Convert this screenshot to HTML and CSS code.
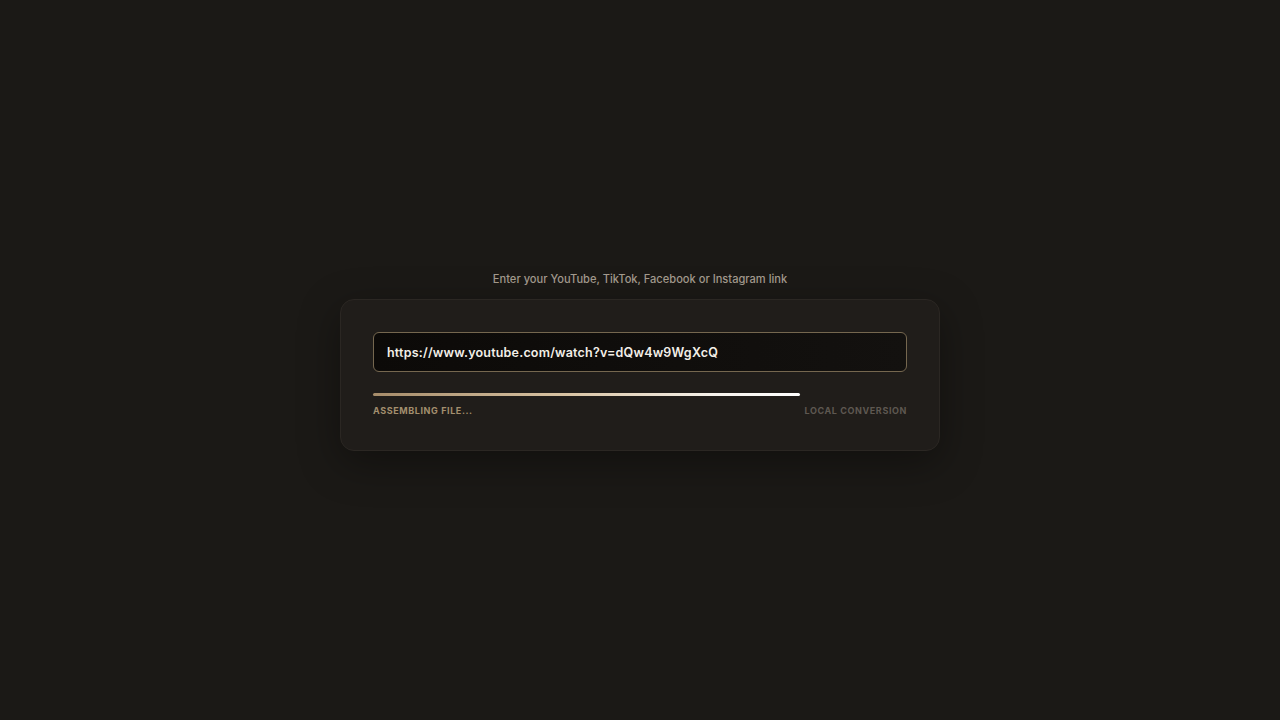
FILE: index.html
```html
<!DOCTYPE html>
<html>
<head>
<meta charset="utf-8">
<link rel="stylesheet" href="styles.css">
</head>
<body>
<main class="wrap">
  <p class="hint">Enter your YouTube, TikTok, Facebook or Instagram link</p>
  <section class="card">
    <div class="field">https://www.youtube.com/watch?v=dQw4w9WgXcQ</div>
    <div class="track"><div class="bar" style="width:80%"></div></div>
    <div class="meta">
      <span class="status">ASSEMBLING FILE...</span>
      <span class="mode">LOCAL CONVERSION</span>
    </div>
  </section>
</main>
</body>
</html>
```
FILE: styles.css
```css
* { box-sizing: border-box; }
html, body { margin: 0; height: 100%; }
body {
  background: #1b1916;
  font-family: Inter, "Noto Sans", sans-serif;
  display: flex;
  align-items: center;
  justify-content: center;
}
.wrap {
  width: 600px;
  padding-top: 2px;
  display: flex;
  flex-direction: column;
  align-items: center;
}
.hint {
  margin: 0 0 12px;
  font-size: 11.1px;
  line-height: 16px;
  color: #a49b8f;
  font-weight: 500;
}
.card {
  width: 600px;
  background: #201d1a;
  border: 1px solid #2b2723;
  border-radius: 14px;
  padding: 32px 32px 33px;
  box-shadow: 0 12px 40px rgba(0,0,0,0.35);
}
.field {
  height: 40px;
  border: 1px solid #75674f;
  border-radius: 6px;
  background: linear-gradient(90deg, #0c0a08, #13110f);
  color: #f3efe8;
  font-size: 12.5px;
  font-weight: 600;
  letter-spacing: 0.2px;
  display: flex;
  align-items: center;
  padding: 0 13px;
}
.track {
  margin-top: 21px;
  height: 3px;
  border-radius: 2px;
}
.bar {
  height: 100%;
  border-radius: 2px;
  background: linear-gradient(90deg, #a68c6a 0%, #d8c3a3 45%, #f6f2ec 80%, #ffffff 100%);
}
.meta {
  margin-top: 9px;
  display: flex;
  justify-content: space-between;
  font-size: 9px;
  line-height: 12px;
  font-weight: 700;
  letter-spacing: 0.6px;
}
.status { color: #a38f6e; }
.mode { color: #5e5851; }
```
